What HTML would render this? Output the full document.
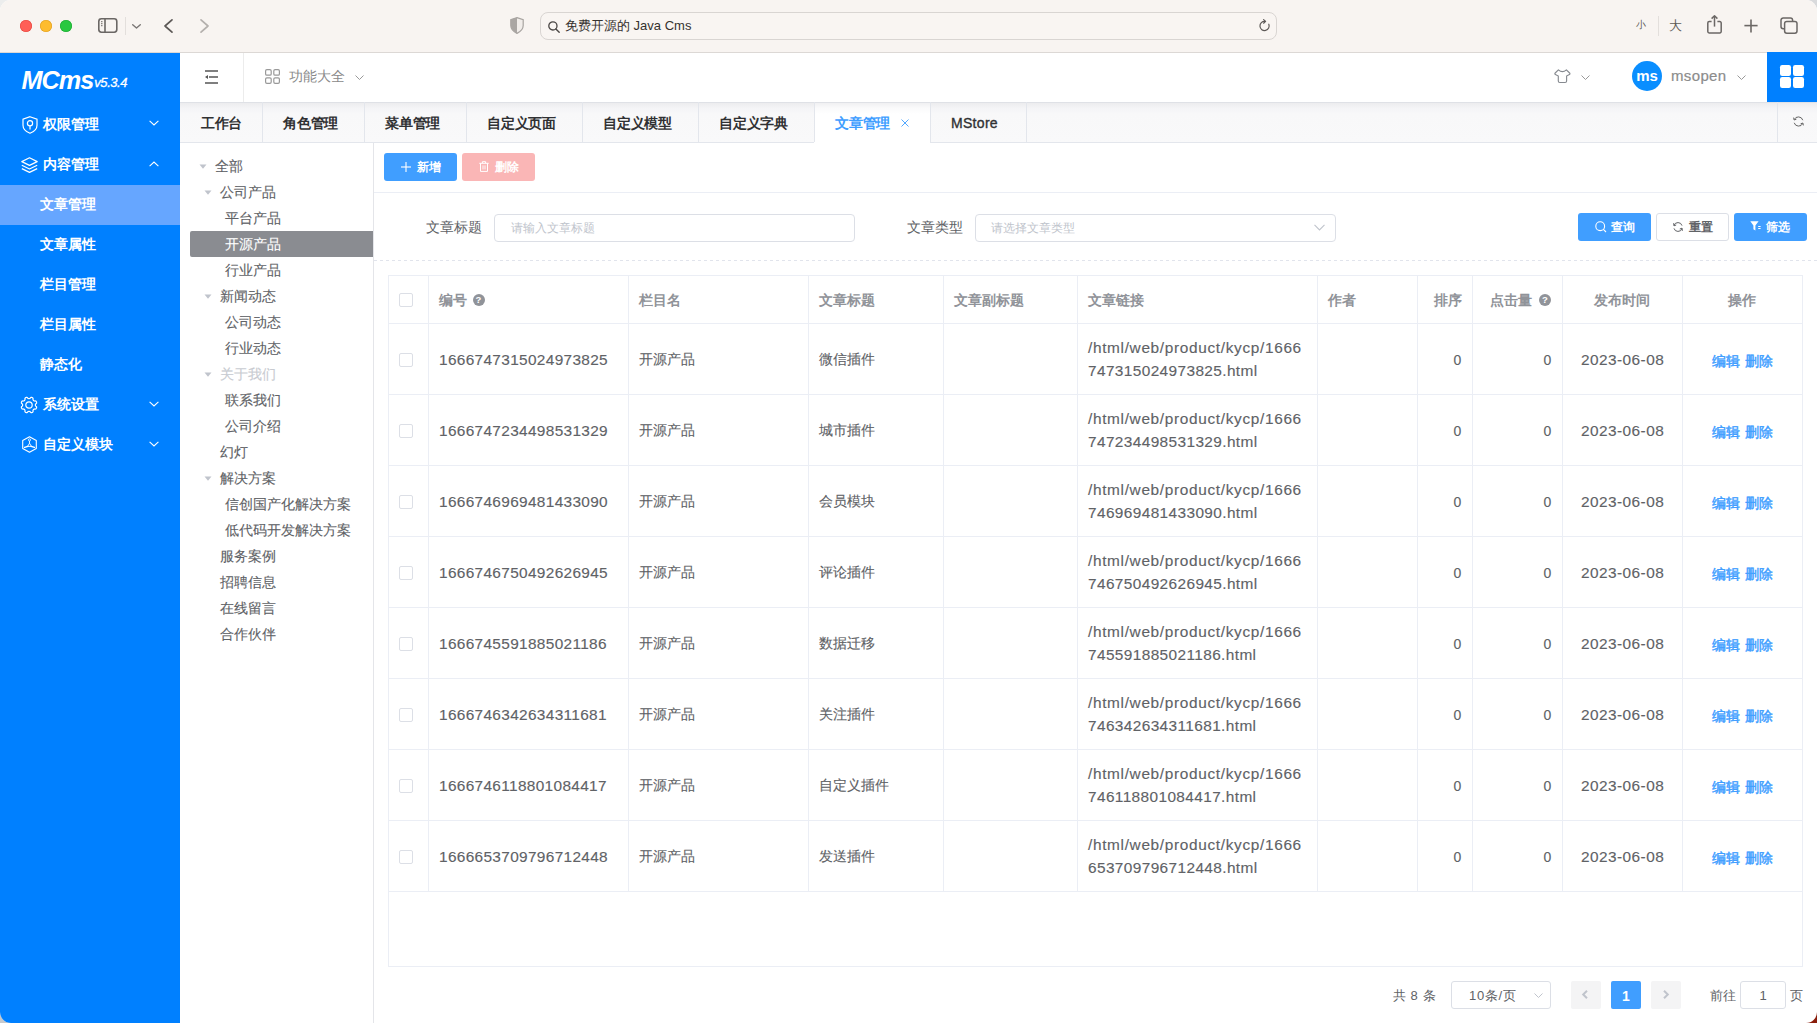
<!DOCTYPE html><html><head><meta charset="utf-8"><style>
*{box-sizing:border-box;margin:0;padding:0}
html,body{width:1817px;height:1023px;overflow:hidden;background:#fff;font-family:"Liberation Sans", sans-serif;}
.ab{position:absolute}
.win{position:absolute;left:0;top:0;width:1817px;height:1023px;border-radius:11px;overflow:hidden;background:#fff}
.tb{position:absolute;left:0;top:0;width:1817px;height:53px;background:#f8f4f1;border-bottom:1px solid #dcd8d5}
.t{position:absolute;white-space:nowrap;line-height:1}
.r{-webkit-text-stroke:0.12px currentColor}
svg{position:absolute;overflow:visible}
</style></head><body>
<div class="ab" style="left:0;top:0;width:14px;height:14px;background:#eceded"></div>
<div class="ab" style="left:1803px;top:0;width:14px;height:14px;background:#d9dadc"></div>
<div class="ab" style="left:0;top:1009px;width:14px;height:14px;background:#c6c9cd"></div>
<div class="ab" style="left:1803px;top:1009px;width:14px;height:14px;background:#8a1d0b"></div>
<div class="win">
<div class="tb">
<div class="ab" style="left:20px;top:19.5px;width:12px;height:12px;border-radius:50%;background:#ff5f57;box-shadow:inset 0 0 0 0.6px #e5473f"></div>
<div class="ab" style="left:40px;top:19.5px;width:12px;height:12px;border-radius:50%;background:#febc2e;box-shadow:inset 0 0 0 0.6px #e0a023"></div>
<div class="ab" style="left:60px;top:19.5px;width:12px;height:12px;border-radius:50%;background:#28c840;box-shadow:inset 0 0 0 0.6px #1fa934"></div>
<svg style="left:98px;top:18px" width="20" height="16" viewBox="0 0 20 16"><rect x="0.8" y="0.8" width="18" height="13.4" rx="2.6" fill="none" stroke="#6b6765" stroke-width="1.6"/><line x1="7" y1="1" x2="7" y2="14.2" stroke="#6b6765" stroke-width="1.6"/><line x1="3.2" y1="3.6" x2="4.4" y2="3.6" stroke="#6b6765" stroke-width="1.1"/><line x1="3.2" y1="5.6" x2="4.4" y2="5.6" stroke="#6b6765" stroke-width="1.1"/><line x1="3.2" y1="7.6" x2="4.4" y2="7.6" stroke="#6b6765" stroke-width="1.1"/></svg>
<div class="ab" style="left:125px;top:17px;width:1px;height:18px;background:#e3dfdc"></div>
<svg style="left:132px;top:23.5px" width="9" height="5" viewBox="0 0 9 5"><polyline points="0.7,0.7 4.5,4 8.3,0.7" fill="none" stroke="#7a7674" stroke-width="1.4" stroke-linecap="round" stroke-linejoin="round"/></svg>
<svg style="left:164px;top:19px" width="9" height="14" viewBox="0 0 9 14"><polyline points="8,0.8 1,7 8,13.2" fill="none" stroke="#5d5957" stroke-width="1.7" stroke-linecap="round" stroke-linejoin="round"/></svg>
<svg style="left:200px;top:19px" width="9" height="14" viewBox="0 0 9 14"><polyline points="1,0.8 8,7 1,13.2" fill="none" stroke="#b4b0ad" stroke-width="1.7" stroke-linecap="round" stroke-linejoin="round"/></svg>
<svg style="left:510px;top:17px" width="14" height="17" viewBox="0 0 14 17"><path d="M7 0.6 L13.2 2.6 V8.5 C13.2 12.3 10 14.8 7 16.4 C4 14.8 0.8 12.3 0.8 8.5 V2.6 Z" fill="#f1edea" stroke="#a8a4a1" stroke-width="1.2"/><path d="M7 0.6 L0.8 2.6 V8.5 C0.8 12.3 4 14.8 7 16.4 Z" fill="#aaa6a3"/></svg>
<div class="ab" style="left:540px;top:12px;width:737px;height:28px;border-radius:8px;border:1px solid #d9d5d2;background:#f9f5f2"></div>
<svg style="left:548px;top:20.5px" width="12" height="12" viewBox="0 0 12 12"><circle cx="4.9" cy="4.9" r="4.1" fill="none" stroke="#4a4644" stroke-width="1.3"/><line x1="7.9" y1="7.9" x2="11.2" y2="11.2" stroke="#4a4644" stroke-width="1.4" stroke-linecap="round"/></svg>
<div class="t" style="left:565px;top:19px;font-size:13px;color:#36322f">免费开源的 Java Cms</div>
<svg style="left:1259px;top:19px" width="12" height="13" viewBox="0 0 12 13"><path d="M9.8 5.2 A4.6 4.6 0 1 1 6 2.4" fill="none" stroke="#5d5957" stroke-width="1.2" stroke-linecap="round"/><polyline points="4.6,0.6 6.6,2.4 4.6,4.2" fill="none" stroke="#5d5957" stroke-width="1.2" stroke-linecap="round" stroke-linejoin="round"/></svg>
<div class="t" style="left:1636px;top:20px;font-size:10px;color:#5d5957">小</div>
<div class="ab" style="left:1658px;top:16px;width:1px;height:20px;background:#e3dfdc"></div>
<div class="t" style="left:1668.8px;top:19px;font-size:13px;color:#5d5957">大</div>
<svg style="left:1707px;top:15px" width="15" height="19" viewBox="0 0 15 19"><path d="M4.6 6.6 H2.2 A1.4 1.4 0 0 0 0.8 8 V16.6 A1.4 1.4 0 0 0 2.2 18 H12.8 A1.4 1.4 0 0 0 14.2 16.6 V8 A1.4 1.4 0 0 0 12.8 6.6 H10.4" fill="none" stroke="#6b6765" stroke-width="1.5"/><line x1="7.5" y1="1" x2="7.5" y2="11.6" stroke="#6b6765" stroke-width="1.5"/><polyline points="4.6,3.6 7.5,0.8 10.4,3.6" fill="none" stroke="#6b6765" stroke-width="1.5" stroke-linejoin="round"/></svg>
<svg style="left:1744px;top:18.5px" width="14" height="14" viewBox="0 0 14 14"><line x1="7" y1="0.6" x2="7" y2="13.4" stroke="#6b6765" stroke-width="1.6"/><line x1="0.4" y1="6.6" x2="13.6" y2="6.6" stroke="#6b6765" stroke-width="1.6"/></svg>
<svg style="left:1780px;top:17px" width="18" height="17" viewBox="0 0 18 17"><path d="M12.6 4.2 V3.2 A2.2 2.2 0 0 0 10.4 1 H3.2 A2.2 2.2 0 0 0 1 3.2 V9.6 A2.2 2.2 0 0 0 3.2 11.8 H4.4" fill="none" stroke="#6b6765" stroke-width="1.5"/><rect x="4.6" y="4.4" width="12.4" height="11.8" rx="2.2" fill="none" stroke="#6b6765" stroke-width="1.5"/></svg>
</div>
<div class="ab" style="left:0;top:53px;width:180px;height:970px;background:#0080ff"></div>
<div class="t" style="left:21.5px;top:67.5px;font-size:25.3px;font-weight:bold;font-style:italic;color:#fff;letter-spacing:-1px">MCms</div>
<div class="t" style="left:94.3px;top:75.8px;font-size:13px;font-style:italic;color:#fff;letter-spacing:-0.45px;-webkit-text-stroke:0.3px #fff">v5.3.4</div>
<div class="ab" style="left:0;top:185px;width:180px;height:40px;background:#66a6ff"></div>
<div class="t" style="left:43px;top:116.5px;font-size:14px;font-weight:bold;color:#fff">权限管理</div>
<svg style="left:149px;top:120.4px" width="10" height="6" viewBox="0 0 10 6"><polyline points="0.6,0.8 5,5 9.4,0.8" fill="none" stroke="#fff" stroke-width="1.1"/></svg>
<svg style="left:21.5px;top:115.5px" width="16" height="18" viewBox="0 0 16 18"><path d="M8 0.7 L15 3.2 V9.2 C15 13 11.6 15.8 8 17.3 C4.4 15.8 1 13 1 9.2 V3.2 Z" fill="none" stroke="#fff" stroke-width="1.2"/><circle cx="8" cy="7.2" r="2.6" fill="none" stroke="#fff" stroke-width="1.2"/><line x1="8" y1="9.8" x2="8" y2="13.4" stroke="#fff" stroke-width="1.2"/></svg>
<div class="t" style="left:43px;top:156.5px;font-size:14px;font-weight:bold;color:#fff">内容管理</div>
<svg style="left:149px;top:161px" width="10" height="6" viewBox="0 0 10 6"><polyline points="0.6,5.2 5,1 9.4,5.2" fill="none" stroke="#fff" stroke-width="1.1"/></svg>
<svg style="left:21px;top:156.5px" width="17" height="16" viewBox="0 0 17 16"><path d="M8.5 0.8 L16.2 4.6 L8.5 8.4 L0.8 4.6 Z" fill="none" stroke="#fff" stroke-width="1.2" stroke-linejoin="round"/><polyline points="0.8,8.2 8.5,12 16.2,8.2" fill="none" stroke="#fff" stroke-width="1.2" stroke-linejoin="round"/><polyline points="0.8,11.6 8.5,15.4 16.2,11.6" fill="none" stroke="#fff" stroke-width="1.2" stroke-linejoin="round"/></svg>
<div class="t" style="left:40px;top:197.0px;font-size:14px;font-weight:bold;color:#fff">文章管理</div>
<div class="t" style="left:40px;top:237.0px;font-size:14px;font-weight:bold;color:#fff">文章属性</div>
<div class="t" style="left:40px;top:277.0px;font-size:14px;font-weight:bold;color:#fff">栏目管理</div>
<div class="t" style="left:40px;top:317.0px;font-size:14px;font-weight:bold;color:#fff">栏目属性</div>
<div class="t" style="left:40px;top:357.0px;font-size:14px;font-weight:bold;color:#fff">静态化</div>
<div class="t" style="left:43px;top:397.0px;font-size:14px;font-weight:bold;color:#fff">系统设置</div>
<svg style="left:149px;top:400.9px" width="10" height="6" viewBox="0 0 10 6"><polyline points="0.6,0.8 5,5 9.4,0.8" fill="none" stroke="#fff" stroke-width="1.1"/></svg>
<svg style="left:20px;top:395.8px" width="18" height="18" viewBox="0 0 18 18"><path d="M15.40 9.00 L15.41 9.17 L15.43 9.34 L15.47 9.51 L15.53 9.69 L15.61 9.87 L15.72 10.06 L15.89 10.28 L16.33 10.56 L16.48 10.80 L16.56 11.03 L16.60 11.25 L16.61 11.47 L16.60 11.69 L16.55 11.90 L16.48 12.10 L16.39 12.29 L16.27 12.47 L16.13 12.63 L15.97 12.78 L15.78 12.92 L15.56 13.02 L15.29 13.08 L14.77 12.97 L14.50 13.00 L14.29 13.06 L14.10 13.13 L13.94 13.22 L13.79 13.31 L13.65 13.41 L13.53 13.53 L13.41 13.65 L13.31 13.79 L13.22 13.94 L13.13 14.10 L13.06 14.29 L13.00 14.50 L12.97 14.77 L13.08 15.29 L13.02 15.56 L12.92 15.78 L12.78 15.97 L12.63 16.13 L12.47 16.27 L12.29 16.39 L12.10 16.48 L11.90 16.55 L11.69 16.60 L11.47 16.61 L11.25 16.60 L11.03 16.56 L10.80 16.48 L10.56 16.33 L10.28 15.89 L10.06 15.72 L9.87 15.61 L9.69 15.53 L9.51 15.47 L9.34 15.43 L9.17 15.41 L9.00 15.40 L8.83 15.41 L8.66 15.43 L8.49 15.47 L8.31 15.53 L8.13 15.61 L7.94 15.72 L7.72 15.89 L7.44 16.33 L7.20 16.48 L6.97 16.56 L6.75 16.60 L6.53 16.61 L6.31 16.60 L6.10 16.55 L5.90 16.48 L5.71 16.39 L5.53 16.27 L5.37 16.13 L5.22 15.97 L5.08 15.78 L4.98 15.56 L4.92 15.29 L5.03 14.77 L5.00 14.50 L4.94 14.29 L4.87 14.10 L4.78 13.94 L4.69 13.79 L4.59 13.65 L4.47 13.53 L4.35 13.41 L4.21 13.31 L4.06 13.22 L3.90 13.13 L3.71 13.06 L3.50 13.00 L3.23 12.97 L2.71 13.08 L2.44 13.02 L2.22 12.92 L2.03 12.78 L1.87 12.63 L1.73 12.47 L1.61 12.29 L1.52 12.10 L1.45 11.90 L1.40 11.69 L1.39 11.47 L1.40 11.25 L1.44 11.03 L1.52 10.80 L1.67 10.56 L2.11 10.28 L2.28 10.06 L2.39 9.87 L2.47 9.69 L2.53 9.51 L2.57 9.34 L2.59 9.17 L2.60 9.00 L2.59 8.83 L2.57 8.66 L2.53 8.49 L2.47 8.31 L2.39 8.13 L2.28 7.94 L2.11 7.72 L1.67 7.44 L1.52 7.20 L1.44 6.97 L1.40 6.75 L1.39 6.53 L1.40 6.31 L1.45 6.10 L1.52 5.90 L1.61 5.71 L1.73 5.53 L1.87 5.37 L2.03 5.22 L2.22 5.08 L2.44 4.98 L2.71 4.92 L3.23 5.03 L3.50 5.00 L3.71 4.94 L3.90 4.87 L4.06 4.78 L4.21 4.69 L4.35 4.59 L4.47 4.47 L4.59 4.35 L4.69 4.21 L4.78 4.06 L4.87 3.90 L4.94 3.71 L5.00 3.50 L5.03 3.23 L4.92 2.71 L4.98 2.44 L5.08 2.22 L5.22 2.03 L5.37 1.87 L5.53 1.73 L5.71 1.61 L5.90 1.52 L6.10 1.45 L6.31 1.40 L6.53 1.39 L6.75 1.40 L6.97 1.44 L7.20 1.52 L7.44 1.67 L7.72 2.11 L7.94 2.28 L8.13 2.39 L8.31 2.47 L8.49 2.53 L8.66 2.57 L8.83 2.59 L9.00 2.60 L9.17 2.59 L9.34 2.57 L9.51 2.53 L9.69 2.47 L9.87 2.39 L10.06 2.28 L10.28 2.11 L10.56 1.67 L10.80 1.52 L11.03 1.44 L11.25 1.40 L11.47 1.39 L11.69 1.40 L11.90 1.45 L12.10 1.52 L12.29 1.61 L12.47 1.73 L12.63 1.87 L12.78 2.03 L12.92 2.22 L13.02 2.44 L13.08 2.71 L12.97 3.23 L13.00 3.50 L13.06 3.71 L13.13 3.90 L13.22 4.06 L13.31 4.21 L13.41 4.35 L13.53 4.47 L13.65 4.59 L13.79 4.69 L13.94 4.78 L14.10 4.87 L14.29 4.94 L14.50 5.00 L14.77 5.03 L15.29 4.92 L15.56 4.98 L15.78 5.08 L15.97 5.22 L16.13 5.37 L16.27 5.53 L16.39 5.71 L16.48 5.90 L16.55 6.10 L16.60 6.31 L16.61 6.53 L16.60 6.75 L16.56 6.97 L16.48 7.20 L16.33 7.44 L15.89 7.72 L15.72 7.94 L15.61 8.13 L15.53 8.31 L15.47 8.49 L15.43 8.66 L15.41 8.83 Z" fill="none" stroke="#fff" stroke-width="1.2" stroke-linejoin="round"/><circle cx="9" cy="9" r="3.2" fill="none" stroke="#fff" stroke-width="1.2"/></svg>
<div class="t" style="left:43px;top:437.0px;font-size:14px;font-weight:bold;color:#fff">自定义模块</div>
<svg style="left:149px;top:440.9px" width="10" height="6" viewBox="0 0 10 6"><polyline points="0.6,0.8 5,5 9.4,0.8" fill="none" stroke="#fff" stroke-width="1.1"/></svg>
<svg style="left:22px;top:436.2px" width="15" height="17" viewBox="0 0 15 17"><path d="M7.5 0.7 L14.3 4.5 V12.4 L7.5 16.2 L0.7 12.4 V4.5 Z" fill="none" stroke="#fff" stroke-width="1.1" stroke-linejoin="round"/><circle cx="7.5" cy="3.9" r="1.1" fill="none" stroke="#fff" stroke-width="0.8"/><line x1="7.5" y1="5" x2="7.5" y2="7.6" stroke="#fff" stroke-width="0.9"/><path d="M7.5 7.2 L5.6 10.4 H9.4 Z" fill="none" stroke="#fff" stroke-width="0.9"/><line x1="5.8" y1="10.3" x2="2.6" y2="11.4" stroke="#fff" stroke-width="1.4" stroke-linecap="round"/><line x1="9.2" y1="10.3" x2="12.4" y2="11.4" stroke="#fff" stroke-width="1.4" stroke-linecap="round"/></svg>
<div class="ab" style="left:180px;top:53px;width:1637px;height:49px;background:#fff"></div>
<div class="ab" style="left:243px;top:53px;width:1px;height:49px;background:#ececec"></div>
<svg style="left:205px;top:70px" width="14" height="14" viewBox="0 0 14 14"><line x1="0" y1="0.9" x2="13" y2="0.9" stroke="#555" stroke-width="1.5"/><line x1="4" y1="7" x2="13" y2="7" stroke="#555" stroke-width="1.5"/><line x1="0" y1="13" x2="13" y2="13" stroke="#555" stroke-width="1.5"/><path d="M0 7 L3 5 V9 Z" fill="#555"/></svg>
<svg style="left:265px;top:68.5px" width="15" height="15" viewBox="0 0 15 15"><rect x="0.6" y="0.6" width="5.6" height="5.6" rx="1.3" fill="none" stroke="#999" stroke-width="1.2"/><rect x="8.8" y="0.6" width="5.6" height="5.6" rx="1.3" fill="none" stroke="#999" stroke-width="1.2"/><rect x="0.6" y="8.8" width="5.6" height="5.6" rx="1.3" fill="none" stroke="#999" stroke-width="1.2"/><rect x="8.8" y="8.8" width="5.6" height="5.6" rx="1.3" fill="none" stroke="#999" stroke-width="1.2"/></svg>
<div class="t" style="left:289px;top:68.5px;font-size:14px;color:#8a8a8a">功能大全</div>
<svg style="left:355px;top:75px" width="9" height="5" viewBox="0 0 9 5"><polyline points="0.5,0.5 4.5,4.5 8.5,0.5" fill="none" stroke="#999" stroke-width="1"/></svg>
<svg style="left:1554px;top:68.5px" width="17" height="15" viewBox="0 0 17 15"><path d="M4.4 0.8 Q8.4 4.6 12.4 0.8 L15.6 4 Q16.4 4.9 15.4 5.6 L12.6 6.9 V12 Q12.6 13.5 11.1 13.5 H5.8 Q4.3 13.5 4.3 12 V6.9 L1.4 5.6 Q0.4 4.9 1.2 4 Z" fill="none" stroke="#868a90" stroke-width="1.15" stroke-linejoin="round"/></svg>
<svg style="left:1581px;top:75px" width="9" height="5" viewBox="0 0 9 5"><polyline points="0.5,0.5 4.5,4.5 8.5,0.5" fill="none" stroke="#999" stroke-width="1"/></svg>
<div class="ab" style="left:1632px;top:61px;width:30px;height:30px;border-radius:50%;background:#0a8eff"></div>
<div class="t" style="left:1636px;top:68px;font-size:15px;font-weight:bold;color:#fff;width:22px;text-align:center;letter-spacing:0px">ms</div>
<div class="t" style="left:1671px;top:68px;font-size:15px;color:#8c8c8c;letter-spacing:0.35px;-webkit-text-stroke:0.2px #8c8c8c">msopen</div>
<svg style="left:1737px;top:75px" width="9" height="5" viewBox="0 0 9 5"><polyline points="0.5,0.5 4.5,4.5 8.5,0.5" fill="none" stroke="#999" stroke-width="1"/></svg>
<div class="ab" style="left:1767px;top:52px;width:50px;height:50px;background:#0080ff"></div>
<div class="ab" style="left:1780px;top:64.8px;width:11px;height:11px;border-radius:2.2px;background:#fff"></div>
<div class="ab" style="left:1780px;top:77.3px;width:11px;height:11px;border-radius:2.2px;background:#fff"></div>
<div class="ab" style="left:1793px;top:64.8px;width:11px;height:11px;border-radius:2.2px;background:#fff"></div>
<div class="ab" style="left:1793px;top:77.3px;width:11px;height:11px;border-radius:2.2px;background:#fff"></div>
<div class="ab" style="left:180px;top:102px;width:1637px;height:41px;background:linear-gradient(#dfe1e6 0px,#dfe1e6 1px,#ececee 1px,#f4f4f6 6px,#f8f8f9 12px,#f9f9fa 40px);border-bottom:1px solid #e3e6ec"></div>
<div class="t" style="left:201px;top:115.5px;font-size:14px;font-weight:bold;color:#303133;letter-spacing:-0.35px">工作台</div>
<div class="ab" style="left:262px;top:102px;width:1px;height:40px;background:#e3e6ec"></div>
<div class="t" style="left:283.3px;top:115.5px;font-size:14px;font-weight:bold;color:#303133;letter-spacing:-0.35px">角色管理</div>
<div class="ab" style="left:364px;top:102px;width:1px;height:40px;background:#e3e6ec"></div>
<div class="t" style="left:385.3px;top:115.5px;font-size:14px;font-weight:bold;color:#303133;letter-spacing:-0.35px">菜单管理</div>
<div class="ab" style="left:466px;top:102px;width:1px;height:40px;background:#e3e6ec"></div>
<div class="t" style="left:487.3px;top:115.5px;font-size:14px;font-weight:bold;color:#303133;letter-spacing:-0.35px">自定义页面</div>
<div class="ab" style="left:582px;top:102px;width:1px;height:40px;background:#e3e6ec"></div>
<div class="t" style="left:603.3px;top:115.5px;font-size:14px;font-weight:bold;color:#303133;letter-spacing:-0.35px">自定义模型</div>
<div class="ab" style="left:698px;top:102px;width:1px;height:40px;background:#e3e6ec"></div>
<div class="t" style="left:719.3px;top:115.5px;font-size:14px;font-weight:bold;color:#303133;letter-spacing:-0.35px">自定义字典</div>
<div class="ab" style="left:814px;top:102px;width:116px;height:41px;background:linear-gradient(#dfe1e6 0px,#dfe1e6 1px,#f0f0f2 1px,#fafafb 6px,#fff 12px)"></div>
<div class="ab" style="left:814px;top:102px;width:1px;height:40px;background:#e3e6ec"></div>
<div class="t" style="left:835.3px;top:115.5px;font-size:14px;font-weight:bold;color:#409eff;letter-spacing:-0.35px">文章管理</div>
<svg style="left:901px;top:119px" width="8" height="8" viewBox="0 0 8 8"><line x1="0.5" y1="0.5" x2="7.5" y2="7.5" stroke="#409eff" stroke-width="0.9"/><line x1="7.5" y1="0.5" x2="0.5" y2="7.5" stroke="#409eff" stroke-width="0.9"/></svg>
<div class="ab" style="left:930px;top:102px;width:1px;height:40px;background:#e3e6ec"></div>
<div class="t" style="left:951px;top:115.5px;font-size:14px;color:#303133;letter-spacing:0.3px;-webkit-text-stroke:0.35px #303133">MStore</div>
<div class="ab" style="left:1026px;top:102px;width:1px;height:40px;background:#e3e6ec"></div>
<div class="ab" style="left:1777px;top:102px;width:1px;height:40px;background:#e3e6ec"></div>
<svg style="left:1792.5px;top:116px" width="11" height="11" viewBox="0 0 11 11"><path d="M1.2 3.6 A4.6 4.6 0 0 1 9.8 4.2" fill="none" stroke="#666" stroke-width="1"/><path d="M9.8 7.4 A4.6 4.6 0 0 1 1.2 6.8" fill="none" stroke="#666" stroke-width="1"/><path d="M0.6 1.6 L1.2 4 L3.4 3.2" fill="none" stroke="#666" stroke-width="1"/><path d="M10.4 9.4 L9.8 7 L7.6 7.8" fill="none" stroke="#666" stroke-width="1"/></svg>
<div class="ab" style="left:373px;top:143px;width:1px;height:880px;background:#e4e5e9"></div>
<div class="ab" style="left:190px;top:231px;width:183px;height:26px;background:#8a8c91;border-radius:2px 0 0 2px"></div>
<div class="t r" style="left:214.5px;top:159.0px;font-size:14px;color:#606266">全部</div>
<svg style="left:199px;top:163.7px" width="8" height="5" viewBox="0 0 8 5"><path d="M0.5 0.5 H7.5 L4 4.8 Z" fill="#c0c4cc"/></svg>
<div class="t r" style="left:219.5px;top:185.0px;font-size:14px;color:#606266">公司产品</div>
<svg style="left:204px;top:189.7px" width="8" height="5" viewBox="0 0 8 5"><path d="M0.5 0.5 H7.5 L4 4.8 Z" fill="#c0c4cc"/></svg>
<div class="t r" style="left:224.5px;top:211.0px;font-size:14px;color:#606266">平台产品</div>
<div class="t r" style="left:224.5px;top:237.0px;font-size:14px;color:#fff">开源产品</div>
<div class="t r" style="left:224.5px;top:263.0px;font-size:14px;color:#606266">行业产品</div>
<div class="t r" style="left:219.5px;top:289.0px;font-size:14px;color:#606266">新闻动态</div>
<svg style="left:204px;top:293.7px" width="8" height="5" viewBox="0 0 8 5"><path d="M0.5 0.5 H7.5 L4 4.8 Z" fill="#c0c4cc"/></svg>
<div class="t r" style="left:224.5px;top:315.0px;font-size:14px;color:#606266">公司动态</div>
<div class="t r" style="left:224.5px;top:341.0px;font-size:14px;color:#606266">行业动态</div>
<div class="t r" style="left:219.5px;top:367.0px;font-size:14px;color:#c8cbd1">关于我们</div>
<svg style="left:204px;top:371.7px" width="8" height="5" viewBox="0 0 8 5"><path d="M0.5 0.5 H7.5 L4 4.8 Z" fill="#c0c4cc"/></svg>
<div class="t r" style="left:224.5px;top:393.0px;font-size:14px;color:#606266">联系我们</div>
<div class="t r" style="left:224.5px;top:419.0px;font-size:14px;color:#606266">公司介绍</div>
<div class="t r" style="left:219.5px;top:445.0px;font-size:14px;color:#606266">幻灯</div>
<div class="t r" style="left:219.5px;top:471.0px;font-size:14px;color:#606266">解决方案</div>
<svg style="left:204px;top:475.7px" width="8" height="5" viewBox="0 0 8 5"><path d="M0.5 0.5 H7.5 L4 4.8 Z" fill="#c0c4cc"/></svg>
<div class="t r" style="left:224.5px;top:497.0px;font-size:14px;color:#606266">信创国产化解决方案</div>
<div class="t r" style="left:224.5px;top:523.0px;font-size:14px;color:#606266">低代码开发解决方案</div>
<div class="t r" style="left:219.5px;top:549.0px;font-size:14px;color:#606266">服务案例</div>
<div class="t r" style="left:219.5px;top:575.0px;font-size:14px;color:#606266">招聘信息</div>
<div class="t r" style="left:219.5px;top:601.0px;font-size:14px;color:#606266">在线留言</div>
<div class="t r" style="left:219.5px;top:627.0px;font-size:14px;color:#606266">合作伙伴</div>
<div class="ab" style="left:374px;top:192px;width:1443px;height:1px;background:#ebeef5"></div>
<div class="ab" style="left:384px;top:153px;width:73px;height:28px;border-radius:3px;background:#409eff"></div>
<svg style="left:401px;top:161.5px" width="10" height="10" viewBox="0 0 10 10"><line x1="5" y1="0" x2="5" y2="10" stroke="#fff" stroke-width="1.1"/><line x1="0" y1="5" x2="10" y2="5" stroke="#fff" stroke-width="1.1"/></svg>
<div class="t" style="left:417px;top:160.5px;font-size:12px;font-weight:bold;color:#fff">新增</div>
<div class="ab" style="left:462px;top:153px;width:73px;height:28px;border-radius:3px;background:#fab6b6"></div>
<svg style="left:478.5px;top:161px" width="10" height="11" viewBox="0 0 10 11"><line x1="0.3" y1="2.3" x2="9.7" y2="2.3" stroke="#fff" stroke-width="1"/><path d="M3.4 2.2 V0.7 H6.6 V2.2" fill="none" stroke="#fff" stroke-width="1"/><path d="M1.5 2.4 V10.4 H8.5 V2.4" fill="none" stroke="#fff" stroke-width="1"/><line x1="4" y1="4.4" x2="4" y2="8.4" stroke="#fff" stroke-width="0.9"/><line x1="6" y1="4.4" x2="6" y2="8.4" stroke="#fff" stroke-width="0.9"/></svg>
<div class="t" style="left:494.5px;top:160.5px;font-size:12px;font-weight:bold;color:#fff">删除</div>
<div class="t" style="left:426px;top:220px;font-size:14px;color:#606266">文章标题</div>
<div class="ab" style="left:494px;top:214px;width:361px;height:28px;border-radius:4px;border:1px solid #dcdfe6;background:#fff"></div>
<div class="t" style="left:510.5px;top:222px;font-size:12px;color:#c0c4cc">请输入文章标题</div>
<div class="t" style="left:907px;top:220px;font-size:14px;color:#606266">文章类型</div>
<div class="ab" style="left:975px;top:214px;width:361px;height:28px;border-radius:4px;border:1px solid #dcdfe6;background:#fff"></div>
<div class="t" style="left:991px;top:222px;font-size:12px;color:#c0c4cc">请选择文章类型</div>
<svg style="left:1313.5px;top:224px" width="11" height="7" viewBox="0 0 11 7"><polyline points="0.5,0.8 5.5,6 10.5,0.8" fill="none" stroke="#c0c4cc" stroke-width="1.1"/></svg>
<div class="ab" style="left:1578px;top:213px;width:73px;height:28px;border-radius:3px;background:#409eff"></div>
<svg style="left:1594.5px;top:220.5px" width="12" height="12" viewBox="0 0 12 12"><circle cx="5.2" cy="5.2" r="4.4" fill="none" stroke="#fff" stroke-width="1.1"/><line x1="8.4" y1="8.4" x2="11" y2="11" stroke="#fff" stroke-width="1.1"/></svg>
<div class="t" style="left:1611px;top:220.5px;font-size:12px;font-weight:bold;color:#fff">查询</div>
<div class="ab" style="left:1656px;top:213px;width:73px;height:28px;border-radius:3px;background:#fff;border:1px solid #dcdfe6"></div>
<svg style="left:1673px;top:221.5px" width="10" height="10" viewBox="0 0 10 10"><path d="M1 3.4 A4.2 4.2 0 0 1 9 3.6" fill="none" stroke="#606266" stroke-width="1"/><path d="M9 6.6 A4.2 4.2 0 0 1 1 6.4" fill="none" stroke="#606266" stroke-width="1"/><path d="M0.6 1.2 L1 3.8 L3.2 3" fill="none" stroke="#606266" stroke-width="1"/><path d="M9.4 8.8 L9 6.2 L6.8 7" fill="none" stroke="#606266" stroke-width="1"/></svg>
<div class="t" style="left:1689px;top:220.5px;font-size:12px;font-weight:bold;color:#606266">重置</div>
<div class="ab" style="left:1734px;top:213px;width:73px;height:28px;border-radius:3px;background:#409eff"></div>
<svg style="left:1750px;top:221px" width="11" height="10" viewBox="0 0 11 10"><path d="M0.3 0.3 H8.6 L5.4 4.4 V9.6 L3.4 8.2 V4.4 Z" fill="#fff"/><rect x="8.2" y="5" width="2.4" height="1" fill="#fff"/><rect x="8.2" y="7" width="2.4" height="1" fill="#fff"/></svg>
<div class="t" style="left:1766px;top:220.5px;font-size:12px;font-weight:bold;color:#fff">筛选</div>
<div class="ab" style="left:374px;top:260px;width:1443px;height:1px;background:repeating-linear-gradient(90deg,#e1e4ec 0 3px,transparent 3px 6px)"></div>
<div class="ab" style="left:388px;top:275px;width:1415px;height:692px;border:1px solid #ebeef5"></div>
<div class="ab" style="left:428px;top:275px;width:1px;height:616px;background:#ebeef5"></div>
<div class="ab" style="left:628px;top:275px;width:1px;height:616px;background:#ebeef5"></div>
<div class="ab" style="left:808px;top:275px;width:1px;height:616px;background:#ebeef5"></div>
<div class="ab" style="left:943px;top:275px;width:1px;height:616px;background:#ebeef5"></div>
<div class="ab" style="left:1077px;top:275px;width:1px;height:616px;background:#ebeef5"></div>
<div class="ab" style="left:1317px;top:275px;width:1px;height:616px;background:#ebeef5"></div>
<div class="ab" style="left:1417px;top:275px;width:1px;height:616px;background:#ebeef5"></div>
<div class="ab" style="left:1472px;top:275px;width:1px;height:616px;background:#ebeef5"></div>
<div class="ab" style="left:1562px;top:275px;width:1px;height:616px;background:#ebeef5"></div>
<div class="ab" style="left:1682px;top:275px;width:1px;height:616px;background:#ebeef5"></div>
<div class="ab" style="left:388px;top:323px;width:1415px;height:1px;background:#ebeef5"></div>
<div class="ab" style="left:388px;top:394px;width:1415px;height:1px;background:#ebeef5"></div>
<div class="ab" style="left:388px;top:465px;width:1415px;height:1px;background:#ebeef5"></div>
<div class="ab" style="left:388px;top:536px;width:1415px;height:1px;background:#ebeef5"></div>
<div class="ab" style="left:388px;top:607px;width:1415px;height:1px;background:#ebeef5"></div>
<div class="ab" style="left:388px;top:678px;width:1415px;height:1px;background:#ebeef5"></div>
<div class="ab" style="left:388px;top:749px;width:1415px;height:1px;background:#ebeef5"></div>
<div class="ab" style="left:388px;top:820px;width:1415px;height:1px;background:#ebeef5"></div>
<div class="ab" style="left:388px;top:891px;width:1415px;height:1px;background:#ebeef5"></div>
<div class="ab" style="left:399px;top:292.5px;width:14px;height:14px;border:1px solid #dcdfe6;border-radius:2px;background:#fff"></div>
<div class="t" style="left:439px;top:292.5px;font-size:14px;font-weight:bold;color:#909399">编号</div>
<div class="ab" style="left:472.5px;top:294px;width:12px;height:12px;border-radius:50%;background:#909399"></div>
<div class="t" style="left:472.5px;top:295px;width:12px;text-align:center;font-size:9.5px;font-weight:bold;color:#fff">?</div>
<div class="t" style="left:639px;top:292.5px;font-size:14px;font-weight:bold;color:#909399">栏目名</div>
<div class="t" style="left:819px;top:292.5px;font-size:14px;font-weight:bold;color:#909399">文章标题</div>
<div class="t" style="left:954px;top:292.5px;font-size:14px;font-weight:bold;color:#909399">文章副标题</div>
<div class="t" style="left:1088px;top:292.5px;font-size:14px;font-weight:bold;color:#909399">文章链接</div>
<div class="t" style="left:1328px;top:292.5px;font-size:14px;font-weight:bold;color:#909399">作者</div>
<div class="t" style="left:1433.5px;top:292.5px;font-size:14px;font-weight:bold;color:#909399">排序</div>
<div class="t" style="left:1490px;top:292.5px;font-size:14px;font-weight:bold;color:#909399">点击量</div>
<div class="ab" style="left:1539px;top:294px;width:12px;height:12px;border-radius:50%;background:#909399"></div>
<div class="t" style="left:1539px;top:295px;width:12px;text-align:center;font-size:9.5px;font-weight:bold;color:#fff">?</div>
<div class="t" style="left:1594px;top:292.5px;font-size:14px;font-weight:bold;color:#909399">发布时间</div>
<div class="t" style="left:1728px;top:292.5px;font-size:14px;font-weight:bold;color:#909399">操作</div>
<div class="ab" style="left:399px;top:352.5px;width:14px;height:14px;border:1px solid #dcdfe6;border-radius:2px;background:#fff"></div>
<div class="t r" style="left:439.3px;top:352.7px;font-size:14px;color:#606266;letter-spacing:0.3px;transform:scaleX(1.1);transform-origin:0 0">1666747315024973825</div>
<div class="t r" style="left:639px;top:351.5px;font-size:14px;color:#606266">开源产品</div>
<div class="t r" style="left:819px;top:351.5px;font-size:14px;color:#606266">微信插件</div>
<div class="t r" style="left:1088px;top:341px;font-size:14px;color:#606266;letter-spacing:0.6px;transform:scaleX(1.1);transform-origin:0 0">/html/web/product/kycp/1666</div>
<div class="t r" style="left:1088px;top:364px;font-size:14px;color:#606266;letter-spacing:0.35px;transform:scaleX(1.1);transform-origin:0 0">747315024973825.html</div>
<div class="t r" style="left:1453.4px;top:352.8px;font-size:14px;color:#606266">0</div>
<div class="t r" style="left:1543.4px;top:352.8px;font-size:14px;color:#606266">0</div>
<div class="t r" style="left:1580.6px;top:352.8px;font-size:14px;color:#606266;letter-spacing:0.4px;transform:scaleX(1.1);transform-origin:0 0">2023-06-08</div>
<div class="t" style="left:1712.2px;top:353.7px;font-size:14px;color:#409eff;-webkit-text-stroke:0.45px #409eff">编辑</div>
<div class="t" style="left:1744.8px;top:353.7px;font-size:14px;color:#409eff;-webkit-text-stroke:0.45px #409eff">删除</div>
<div class="ab" style="left:399px;top:423.5px;width:14px;height:14px;border:1px solid #dcdfe6;border-radius:2px;background:#fff"></div>
<div class="t r" style="left:439.3px;top:423.7px;font-size:14px;color:#606266;letter-spacing:0.3px;transform:scaleX(1.1);transform-origin:0 0">1666747234498531329</div>
<div class="t r" style="left:639px;top:422.5px;font-size:14px;color:#606266">开源产品</div>
<div class="t r" style="left:819px;top:422.5px;font-size:14px;color:#606266">城市插件</div>
<div class="t r" style="left:1088px;top:412px;font-size:14px;color:#606266;letter-spacing:0.6px;transform:scaleX(1.1);transform-origin:0 0">/html/web/product/kycp/1666</div>
<div class="t r" style="left:1088px;top:435px;font-size:14px;color:#606266;letter-spacing:0.35px;transform:scaleX(1.1);transform-origin:0 0">747234498531329.html</div>
<div class="t r" style="left:1453.4px;top:423.8px;font-size:14px;color:#606266">0</div>
<div class="t r" style="left:1543.4px;top:423.8px;font-size:14px;color:#606266">0</div>
<div class="t r" style="left:1580.6px;top:423.8px;font-size:14px;color:#606266;letter-spacing:0.4px;transform:scaleX(1.1);transform-origin:0 0">2023-06-08</div>
<div class="t" style="left:1712.2px;top:424.7px;font-size:14px;color:#409eff;-webkit-text-stroke:0.45px #409eff">编辑</div>
<div class="t" style="left:1744.8px;top:424.7px;font-size:14px;color:#409eff;-webkit-text-stroke:0.45px #409eff">删除</div>
<div class="ab" style="left:399px;top:494.5px;width:14px;height:14px;border:1px solid #dcdfe6;border-radius:2px;background:#fff"></div>
<div class="t r" style="left:439.3px;top:494.7px;font-size:14px;color:#606266;letter-spacing:0.3px;transform:scaleX(1.1);transform-origin:0 0">1666746969481433090</div>
<div class="t r" style="left:639px;top:493.5px;font-size:14px;color:#606266">开源产品</div>
<div class="t r" style="left:819px;top:493.5px;font-size:14px;color:#606266">会员模块</div>
<div class="t r" style="left:1088px;top:483px;font-size:14px;color:#606266;letter-spacing:0.6px;transform:scaleX(1.1);transform-origin:0 0">/html/web/product/kycp/1666</div>
<div class="t r" style="left:1088px;top:506px;font-size:14px;color:#606266;letter-spacing:0.35px;transform:scaleX(1.1);transform-origin:0 0">746969481433090.html</div>
<div class="t r" style="left:1453.4px;top:494.8px;font-size:14px;color:#606266">0</div>
<div class="t r" style="left:1543.4px;top:494.8px;font-size:14px;color:#606266">0</div>
<div class="t r" style="left:1580.6px;top:494.8px;font-size:14px;color:#606266;letter-spacing:0.4px;transform:scaleX(1.1);transform-origin:0 0">2023-06-08</div>
<div class="t" style="left:1712.2px;top:495.7px;font-size:14px;color:#409eff;-webkit-text-stroke:0.45px #409eff">编辑</div>
<div class="t" style="left:1744.8px;top:495.7px;font-size:14px;color:#409eff;-webkit-text-stroke:0.45px #409eff">删除</div>
<div class="ab" style="left:399px;top:565.5px;width:14px;height:14px;border:1px solid #dcdfe6;border-radius:2px;background:#fff"></div>
<div class="t r" style="left:439.3px;top:565.7px;font-size:14px;color:#606266;letter-spacing:0.3px;transform:scaleX(1.1);transform-origin:0 0">1666746750492626945</div>
<div class="t r" style="left:639px;top:564.5px;font-size:14px;color:#606266">开源产品</div>
<div class="t r" style="left:819px;top:564.5px;font-size:14px;color:#606266">评论插件</div>
<div class="t r" style="left:1088px;top:554px;font-size:14px;color:#606266;letter-spacing:0.6px;transform:scaleX(1.1);transform-origin:0 0">/html/web/product/kycp/1666</div>
<div class="t r" style="left:1088px;top:577px;font-size:14px;color:#606266;letter-spacing:0.35px;transform:scaleX(1.1);transform-origin:0 0">746750492626945.html</div>
<div class="t r" style="left:1453.4px;top:565.8px;font-size:14px;color:#606266">0</div>
<div class="t r" style="left:1543.4px;top:565.8px;font-size:14px;color:#606266">0</div>
<div class="t r" style="left:1580.6px;top:565.8px;font-size:14px;color:#606266;letter-spacing:0.4px;transform:scaleX(1.1);transform-origin:0 0">2023-06-08</div>
<div class="t" style="left:1712.2px;top:566.7px;font-size:14px;color:#409eff;-webkit-text-stroke:0.45px #409eff">编辑</div>
<div class="t" style="left:1744.8px;top:566.7px;font-size:14px;color:#409eff;-webkit-text-stroke:0.45px #409eff">删除</div>
<div class="ab" style="left:399px;top:636.5px;width:14px;height:14px;border:1px solid #dcdfe6;border-radius:2px;background:#fff"></div>
<div class="t r" style="left:439.3px;top:636.7px;font-size:14px;color:#606266;letter-spacing:0.3px;transform:scaleX(1.1);transform-origin:0 0">1666745591885021186</div>
<div class="t r" style="left:639px;top:635.5px;font-size:14px;color:#606266">开源产品</div>
<div class="t r" style="left:819px;top:635.5px;font-size:14px;color:#606266">数据迁移</div>
<div class="t r" style="left:1088px;top:625px;font-size:14px;color:#606266;letter-spacing:0.6px;transform:scaleX(1.1);transform-origin:0 0">/html/web/product/kycp/1666</div>
<div class="t r" style="left:1088px;top:648px;font-size:14px;color:#606266;letter-spacing:0.35px;transform:scaleX(1.1);transform-origin:0 0">745591885021186.html</div>
<div class="t r" style="left:1453.4px;top:636.8px;font-size:14px;color:#606266">0</div>
<div class="t r" style="left:1543.4px;top:636.8px;font-size:14px;color:#606266">0</div>
<div class="t r" style="left:1580.6px;top:636.8px;font-size:14px;color:#606266;letter-spacing:0.4px;transform:scaleX(1.1);transform-origin:0 0">2023-06-08</div>
<div class="t" style="left:1712.2px;top:637.7px;font-size:14px;color:#409eff;-webkit-text-stroke:0.45px #409eff">编辑</div>
<div class="t" style="left:1744.8px;top:637.7px;font-size:14px;color:#409eff;-webkit-text-stroke:0.45px #409eff">删除</div>
<div class="ab" style="left:399px;top:707.5px;width:14px;height:14px;border:1px solid #dcdfe6;border-radius:2px;background:#fff"></div>
<div class="t r" style="left:439.3px;top:707.7px;font-size:14px;color:#606266;letter-spacing:0.3px;transform:scaleX(1.1);transform-origin:0 0">1666746342634311681</div>
<div class="t r" style="left:639px;top:706.5px;font-size:14px;color:#606266">开源产品</div>
<div class="t r" style="left:819px;top:706.5px;font-size:14px;color:#606266">关注插件</div>
<div class="t r" style="left:1088px;top:696px;font-size:14px;color:#606266;letter-spacing:0.6px;transform:scaleX(1.1);transform-origin:0 0">/html/web/product/kycp/1666</div>
<div class="t r" style="left:1088px;top:719px;font-size:14px;color:#606266;letter-spacing:0.35px;transform:scaleX(1.1);transform-origin:0 0">746342634311681.html</div>
<div class="t r" style="left:1453.4px;top:707.8px;font-size:14px;color:#606266">0</div>
<div class="t r" style="left:1543.4px;top:707.8px;font-size:14px;color:#606266">0</div>
<div class="t r" style="left:1580.6px;top:707.8px;font-size:14px;color:#606266;letter-spacing:0.4px;transform:scaleX(1.1);transform-origin:0 0">2023-06-08</div>
<div class="t" style="left:1712.2px;top:708.7px;font-size:14px;color:#409eff;-webkit-text-stroke:0.45px #409eff">编辑</div>
<div class="t" style="left:1744.8px;top:708.7px;font-size:14px;color:#409eff;-webkit-text-stroke:0.45px #409eff">删除</div>
<div class="ab" style="left:399px;top:778.5px;width:14px;height:14px;border:1px solid #dcdfe6;border-radius:2px;background:#fff"></div>
<div class="t r" style="left:439.3px;top:778.7px;font-size:14px;color:#606266;letter-spacing:0.3px;transform:scaleX(1.1);transform-origin:0 0">1666746118801084417</div>
<div class="t r" style="left:639px;top:777.5px;font-size:14px;color:#606266">开源产品</div>
<div class="t r" style="left:819px;top:777.5px;font-size:14px;color:#606266">自定义插件</div>
<div class="t r" style="left:1088px;top:767px;font-size:14px;color:#606266;letter-spacing:0.6px;transform:scaleX(1.1);transform-origin:0 0">/html/web/product/kycp/1666</div>
<div class="t r" style="left:1088px;top:790px;font-size:14px;color:#606266;letter-spacing:0.35px;transform:scaleX(1.1);transform-origin:0 0">746118801084417.html</div>
<div class="t r" style="left:1453.4px;top:778.8px;font-size:14px;color:#606266">0</div>
<div class="t r" style="left:1543.4px;top:778.8px;font-size:14px;color:#606266">0</div>
<div class="t r" style="left:1580.6px;top:778.8px;font-size:14px;color:#606266;letter-spacing:0.4px;transform:scaleX(1.1);transform-origin:0 0">2023-06-08</div>
<div class="t" style="left:1712.2px;top:779.7px;font-size:14px;color:#409eff;-webkit-text-stroke:0.45px #409eff">编辑</div>
<div class="t" style="left:1744.8px;top:779.7px;font-size:14px;color:#409eff;-webkit-text-stroke:0.45px #409eff">删除</div>
<div class="ab" style="left:399px;top:849.5px;width:14px;height:14px;border:1px solid #dcdfe6;border-radius:2px;background:#fff"></div>
<div class="t r" style="left:439.3px;top:849.7px;font-size:14px;color:#606266;letter-spacing:0.3px;transform:scaleX(1.1);transform-origin:0 0">1666653709796712448</div>
<div class="t r" style="left:639px;top:848.5px;font-size:14px;color:#606266">开源产品</div>
<div class="t r" style="left:819px;top:848.5px;font-size:14px;color:#606266">发送插件</div>
<div class="t r" style="left:1088px;top:838px;font-size:14px;color:#606266;letter-spacing:0.6px;transform:scaleX(1.1);transform-origin:0 0">/html/web/product/kycp/1666</div>
<div class="t r" style="left:1088px;top:861px;font-size:14px;color:#606266;letter-spacing:0.35px;transform:scaleX(1.1);transform-origin:0 0">653709796712448.html</div>
<div class="t r" style="left:1453.4px;top:849.8px;font-size:14px;color:#606266">0</div>
<div class="t r" style="left:1543.4px;top:849.8px;font-size:14px;color:#606266">0</div>
<div class="t r" style="left:1580.6px;top:849.8px;font-size:14px;color:#606266;letter-spacing:0.4px;transform:scaleX(1.1);transform-origin:0 0">2023-06-08</div>
<div class="t" style="left:1712.2px;top:850.7px;font-size:14px;color:#409eff;-webkit-text-stroke:0.45px #409eff">编辑</div>
<div class="t" style="left:1744.8px;top:850.7px;font-size:14px;color:#409eff;-webkit-text-stroke:0.45px #409eff">删除</div>
<div class="t" style="left:1392.5px;top:989px;font-size:13px;color:#606266;letter-spacing:0.75px">共 8 条</div>
<div class="ab" style="left:1451px;top:981px;width:100px;height:28px;border-radius:3px;border:1px solid #dcdfe6;background:#fff"></div>
<div class="t" style="left:1469px;top:989px;font-size:13px;color:#606266;letter-spacing:0.7px">10条/页</div>
<svg style="left:1534px;top:993px" width="9" height="5" viewBox="0 0 9 5"><polyline points="0.5,0.5 4.5,4.5 8.5,0.5" fill="none" stroke="#c0c4cc" stroke-width="1"/></svg>
<div class="ab" style="left:1571px;top:981px;width:30px;height:28px;border-radius:2px;background:#f4f4f5"></div>
<svg style="left:1582px;top:990px" width="6" height="9" viewBox="0 0 6 9"><polyline points="5,0.8 1.2,4.5 5,8.2" fill="none" stroke="#c0c4cc" stroke-width="2"/></svg>
<div class="ab" style="left:1611px;top:981px;width:30px;height:28px;border-radius:2px;background:#409eff"></div>
<div class="t" style="left:1611px;top:988.5px;width:30px;text-align:center;font-size:14px;font-weight:bold;color:#fff">1</div>
<div class="ab" style="left:1651px;top:981px;width:30px;height:28px;border-radius:2px;background:#f4f4f5"></div>
<svg style="left:1663px;top:990px" width="6" height="9" viewBox="0 0 6 9"><polyline points="1,0.8 4.8,4.5 1,8.2" fill="none" stroke="#c0c4cc" stroke-width="2"/></svg>
<div class="t" style="left:1710px;top:989px;font-size:13px;color:#606266">前往</div>
<div class="ab" style="left:1740px;top:981px;width:46px;height:28px;border-radius:3px;border:1px solid #dcdfe6;background:#fff"></div>
<div class="t" style="left:1740px;top:988.5px;width:46px;text-align:center;font-size:13px;color:#606266">1</div>
<div class="t" style="left:1789.5px;top:989px;font-size:13px;color:#606266">页</div>
</div>
</body></html>
